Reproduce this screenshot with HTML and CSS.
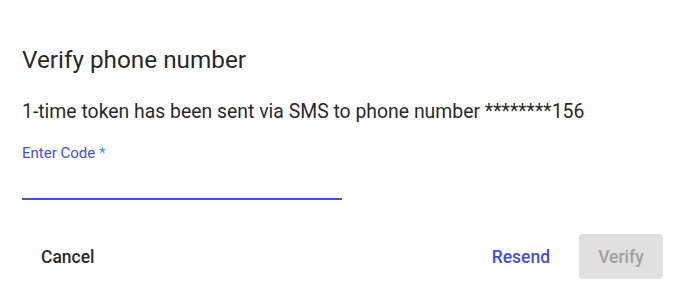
FILE: index.html
```html
<!DOCTYPE html>
<html>
<head>
<meta charset="utf-8">
<link rel="stylesheet" href="styles.css">
</head>
<body>
<div class="dialog">
  <h2 class="title">Verify phone number</h2>
  <p class="message">1-time token has been sent via SMS to phone number ********156</p>
  <div class="field">
    <label class="label">Enter Code <span class="req">*</span></label>
    <div class="input"></div>
  </div>
  <div class="actions">
    <button class="btn cancel">Cancel</button>
    <div class="right">
      <button class="btn resend">Resend</button>
      <button class="btn verify" disabled>Verify</button>
    </div>
  </div>
</div>
</body>
</html>
```
FILE: styles.css
```css
html, body {
  margin: 0;
  background: #fff;
  font-family: Roboto, "Noto Sans", sans-serif;
}
.dialog {
  width: 688px;
  box-sizing: border-box;
  padding: 44px 25px 0 22px;
}
.title {
  margin: 0;
  font-size: 24.3px;
  line-height: 32px;
  font-weight: 400;
  color: rgba(0,0,0,0.87);
}
.message {
  margin: 24px 0 0;
  font-size: 19.4px;
  line-height: 24px;
  color: rgba(0,0,0,0.87);
}
.field {
  margin-top: 19px;
  width: 320px;
}
.label {
  display: block;
  font-size: 15px;
  line-height: 20px;
  color: #3f4fe0;
}
.req {
  color: #2196f3;
}
.input {
  height: 35px;
  border-bottom: 2px solid #4050e0;
}
.actions {
  margin-top: 34px;
  display: flex;
  justify-content: space-between;
  align-items: center;
}
.right {
  display: flex;
  align-items: center;
  gap: 13px;
}
.btn {
  font-family: Roboto, "Noto Sans", sans-serif;
  font-size: 17.5px;
  font-weight: 500;
  border: none;
  background: transparent;
  height: 45px;
  padding: 0 16px;
  border-radius: 4px;
  cursor: pointer;
}
.cancel {
  color: rgba(0,0,0,0.87);
  margin-left: 3px;
}
.resend {
  color: #3f4fe0;
}
.verify {
  background: #e0e0e0;
  color: #a0a0a0;
  width: 84px;
  padding: 0;
}
```
